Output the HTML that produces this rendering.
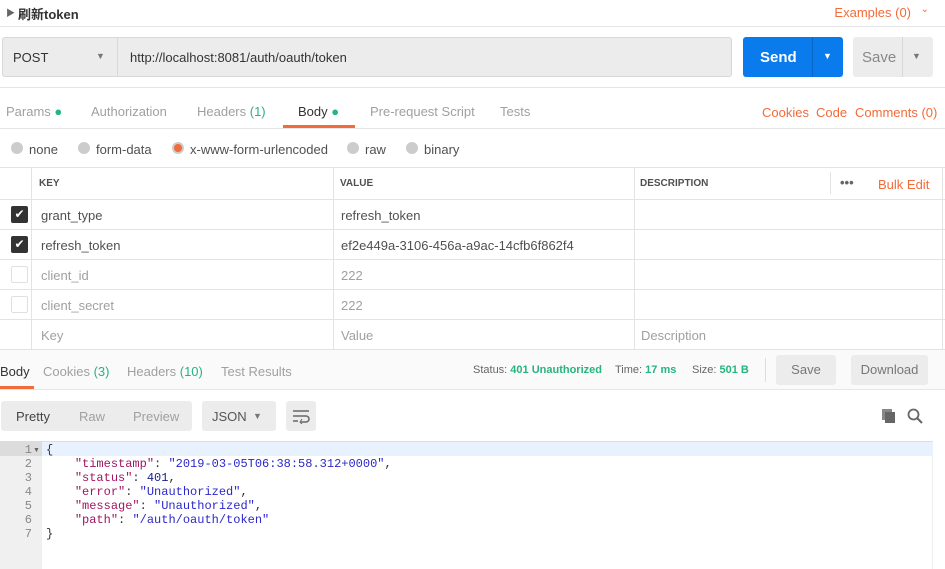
<!DOCTYPE html>
<html><head><style>
*{margin:0;padding:0;box-sizing:border-box}
body{width:945px;height:569px;background:#fff;font-family:"Liberation Sans","Noto Sans CJK SC",sans-serif;font-size:13px;color:#505050;position:relative;overflow:hidden}
.a{position:absolute;white-space:nowrap}
.g{color:#26b47f}.o{color:#f26b3a}.l{color:#a0a0a0}
.rad{position:absolute;width:12px;height:12px;border-radius:50%;background:#ccc}
.cb{position:absolute;left:11px;width:17px;height:17px;border-radius:2px}
.code{font-family:"Liberation Mono",monospace;font-size:12px;position:absolute;left:46px;line-height:14px}
.k{color:#a31562}.s{color:#2c28c9}.n{color:#1b1d8a}
</style></head><body>
<div class="a" style="left:6px;top:6px;font-size:9px;color:#666">▶</div>
<div class="a" style="left:18px;top:4px;font-size:13px;font-weight:bold;color:#333">刷新token</div>
<div class="a o" style="right:34px;top:5px">Examples (0)</div>
<div class="a o" style="right:16px;top:4px;font-size:10px">⌄</div>
<div class="a" style="left:0;top:26px;width:945px;height:1px;background:#e6e6e6"></div>

<div class="a" style="left:2px;top:37px;width:730px;height:40px;background:#ececec;border:1px solid #d8d8d8;border-radius:3px"></div>
<div class="a" style="left:117px;top:38px;width:1px;height:38px;background:#d8d8d8"></div>
<div class="a" style="left:13px;top:50px;color:#333">POST</div>
<div class="a" style="left:96px;top:51px;font-size:9px;color:#777">▼</div>
<div class="a" style="left:130px;top:50px;color:#333">http://localhost:8081/auth/oauth/token</div>
<div class="a" style="left:743px;top:37px;width:100px;height:40px;background:#097bed;border-radius:3px"></div>
<div class="a" style="left:812px;top:37px;width:1px;height:40px;background:#0a66c4"></div>
<div class="a" style="left:760px;top:49px;color:#fff;font-size:15px;font-weight:bold">Send</div>
<div class="a" style="left:823px;top:51px;color:#fff;font-size:9px">▼</div>
<div class="a" style="left:853px;top:37px;width:80px;height:40px;background:#ececec;border-radius:3px"></div>
<div class="a" style="left:902px;top:37px;width:1px;height:40px;background:#d8d8d8"></div>
<div class="a" style="left:862px;top:49px;font-size:15px;color:#888">Save</div>
<div class="a" style="left:912px;top:51px;font-size:9px;color:#777">▼</div>
<div class="a" style="left:0;top:87px;width:945px;height:1px;background:#e6e6e6"></div>

<div class="a l" style="left:6px;top:104px">Params <span class="g">●</span></div>
<div class="a l" style="left:91px;top:104px">Authorization</div>
<div class="a l" style="left:197px;top:104px">Headers <span class="g">(1)</span></div>
<div class="a" style="left:298px;top:104px;color:#333">Body <span class="g">●</span></div>
<div class="a l" style="left:370px;top:104px">Pre-request Script</div>
<div class="a l" style="left:500px;top:104px">Tests</div>
<div class="a o" style="left:762px;top:105px">Cookies</div>
<div class="a o" style="left:816px;top:105px">Code</div>
<div class="a o" style="left:855px;top:105px">Comments (0)</div>
<div class="a" style="left:283px;top:125px;width:72px;height:3px;background:#f26b3a"></div>
<div class="a" style="left:0;top:128px;width:945px;height:1px;background:#e6e6e6"></div>

<div class="rad" style="left:11px;top:142px"></div><div class="a" style="left:29px;top:142px">none</div>
<div class="rad" style="left:78px;top:142px"></div><div class="a" style="left:96px;top:142px">form-data</div>
<div class="rad" style="left:172px;top:142px;background:#ccc"><div style="margin:2px;width:8px;height:8px;border-radius:50%;background:#f26b3a"></div></div><div class="a" style="left:190px;top:142px">x-www-form-urlencoded</div>
<div class="rad" style="left:347px;top:142px"></div><div class="a" style="left:365px;top:142px">raw</div>
<div class="rad" style="left:406px;top:142px"></div><div class="a" style="left:424px;top:142px">binary</div>

<div class="a" style="left:0;top:167px;width:945px;height:183px;border-top:1px solid #e3e3e3"></div>
<div class="a" style="left:0;top:199px;width:945px;height:1px;background:#e3e3e3"></div>
<div class="a" style="left:0;top:229px;width:945px;height:1px;background:#e3e3e3"></div>
<div class="a" style="left:0;top:259px;width:945px;height:1px;background:#e3e3e3"></div>
<div class="a" style="left:0;top:289px;width:945px;height:1px;background:#e3e3e3"></div>
<div class="a" style="left:0;top:319px;width:945px;height:1px;background:#e3e3e3"></div>
<div class="a" style="left:0;top:349px;width:945px;height:1px;background:#e3e3e3"></div>
<div class="a" style="left:31px;top:167px;width:1px;height:182px;background:#e3e3e3"></div>
<div class="a" style="left:333px;top:167px;width:1px;height:182px;background:#e3e3e3"></div>
<div class="a" style="left:634px;top:167px;width:1px;height:182px;background:#e3e3e3"></div>
<div class="a" style="left:942px;top:167px;width:1px;height:182px;background:#e3e3e3"></div>
<div class="a" style="left:830px;top:172px;width:1px;height:22px;background:#e3e3e3"></div>
<div class="a" style="left:39px;top:178px;font-size:10px;font-weight:bold;color:#505050">KEY</div>
<div class="a" style="left:340px;top:178px;font-size:10px;font-weight:bold;color:#505050">VALUE</div>
<div class="a" style="left:640px;top:178px;font-size:10px;font-weight:bold;color:#505050">DESCRIPTION</div>
<div class="a" style="left:840px;top:175px;font-weight:bold;color:#666">•••</div>
<div class="a o" style="left:878px;top:177px">Bulk Edit</div>

<div class="cb" style="top:206px;background:#333;color:#fff;font-size:12px;text-align:center;line-height:17px">✔</div>
<div class="a" style="left:41px;top:208px">grant_type</div><div class="a" style="left:341px;top:208px">refresh_token</div>
<div class="cb" style="top:236px;background:#333;color:#fff;font-size:12px;text-align:center;line-height:17px">✔</div>
<div class="a" style="left:41px;top:238px">refresh_token</div><div class="a" style="left:341px;top:238px">ef2e449a-3106-456a-a9ac-14cfb6f862f4</div>
<div class="cb" style="top:266px;border:1px solid #e0e0e0"></div>
<div class="a l" style="left:41px;top:268px">client_id</div><div class="a l" style="left:341px;top:268px">222</div>
<div class="cb" style="top:296px;border:1px solid #e0e0e0"></div>
<div class="a l" style="left:41px;top:298px">client_secret</div><div class="a l" style="left:341px;top:298px">222</div>
<div class="a l" style="left:41px;top:328px">Key</div><div class="a l" style="left:341px;top:328px">Value</div><div class="a l" style="left:641px;top:328px">Description</div>

<div class="a" style="left:0;top:350px;width:945px;height:40px;background:#fafafa;border-bottom:1px solid #e6e6e6"></div>
<div class="a" style="left:0;top:364px;color:#333">Body</div>
<div class="a" style="left:0;top:386px;width:34px;height:3px;background:#f26b3a"></div>
<div class="a l" style="left:43px;top:364px">Cookies <span class="g">(3)</span></div>
<div class="a l" style="left:127px;top:364px">Headers <span class="g">(10)</span></div>
<div class="a l" style="left:221px;top:364px">Test Results</div>
<div class="a" style="left:473px;top:364px;font-size:11px;color:#666">Status: <b class="g">401 Unauthorized</b></div>
<div class="a" style="left:615px;top:364px;font-size:11px;color:#666">Time: <b class="g">17 ms</b></div>
<div class="a" style="left:692px;top:364px;font-size:11px;color:#666">Size: <b class="g">501 B</b></div>
<div class="a" style="left:765px;top:358px;width:1px;height:24px;background:#ddd"></div>
<div class="a" style="left:776px;top:355px;width:60px;height:30px;background:#ececec;border-radius:3px;text-align:center;line-height:30px;color:#777">Save</div>
<div class="a" style="left:851px;top:355px;width:77px;height:30px;background:#ececec;border-radius:3px;text-align:center;line-height:30px;color:#777">Download</div>

<div class="a" style="left:1px;top:401px;width:191px;height:30px;background:#ececec;border-radius:3px"></div>
<div class="a" style="left:16px;top:409px;color:#444">Pretty</div>
<div class="a l" style="left:79px;top:409px">Raw</div>
<div class="a l" style="left:133px;top:409px">Preview</div>
<div class="a" style="left:202px;top:401px;width:74px;height:30px;background:#ececec;border-radius:3px"></div>
<div class="a" style="left:212px;top:409px;color:#555">JSON</div>
<div class="a" style="left:253px;top:411px;font-size:9px;color:#777">▼</div>
<div class="a" style="left:286px;top:401px;width:30px;height:30px;background:#ececec;border-radius:3px"></div>
<svg class="a" style="left:292px;top:408px" width="18" height="16"><path d="M1 3h16M1 8h13a3 3 0 0 1 0 6H9M1 13h5" stroke="#666" stroke-width="1.5" fill="none"/><path d="M10 11l-2 3 2 2" stroke="#666" fill="none"/></svg>
<svg class="a" style="left:881px;top:408px" width="16" height="16"><rect x="1" y="1" width="10" height="11" fill="#888"/><rect x="4" y="4" width="10" height="11" fill="#666"/></svg>
<svg class="a" style="left:907px;top:408px" width="16" height="16"><circle cx="6.5" cy="6.5" r="5" stroke="#666" stroke-width="1.8" fill="none"/><path d="M10 10l5 5" stroke="#666" stroke-width="2"/></svg>

<div class="a" style="left:0;top:441px;width:933px;height:128px;border-top:1px solid #ddd;border-right:1px solid #eee"></div>
<div class="a" style="left:0;top:442px;width:42px;height:127px;background:#f0f0f0"></div>
<div class="a" style="left:42px;top:442px;width:891px;height:14px;background:#e8f2ff"></div>
<div class="a" style="left:0;top:442px;width:42px;height:14px;background:#dcdcdc"></div>
<div class="code" style="left:0;top:443px;width:40px;text-align:right;color:#888;padding-right:8px">1<br>2<br>3<br>4<br>5<br>6<br>7</div>
<div class="a" style="left:33px;top:447px;font-size:7px;color:#666">▼</div>
<div class="code" style="top:443px;white-space:pre;color:#333">{
    <span class="k">"timestamp"</span>: <span class="s">"2019-03-05T06:38:58.312+0000"</span>,
    <span class="k">"status"</span>: <span class="n">401</span>,
    <span class="k">"error"</span>: <span class="s">"Unauthorized"</span>,
    <span class="k">"message"</span>: <span class="s">"Unauthorized"</span>,
    <span class="k">"path"</span>: <span class="s">"/auth/oauth/token"</span>
}</div>
</body></html>
